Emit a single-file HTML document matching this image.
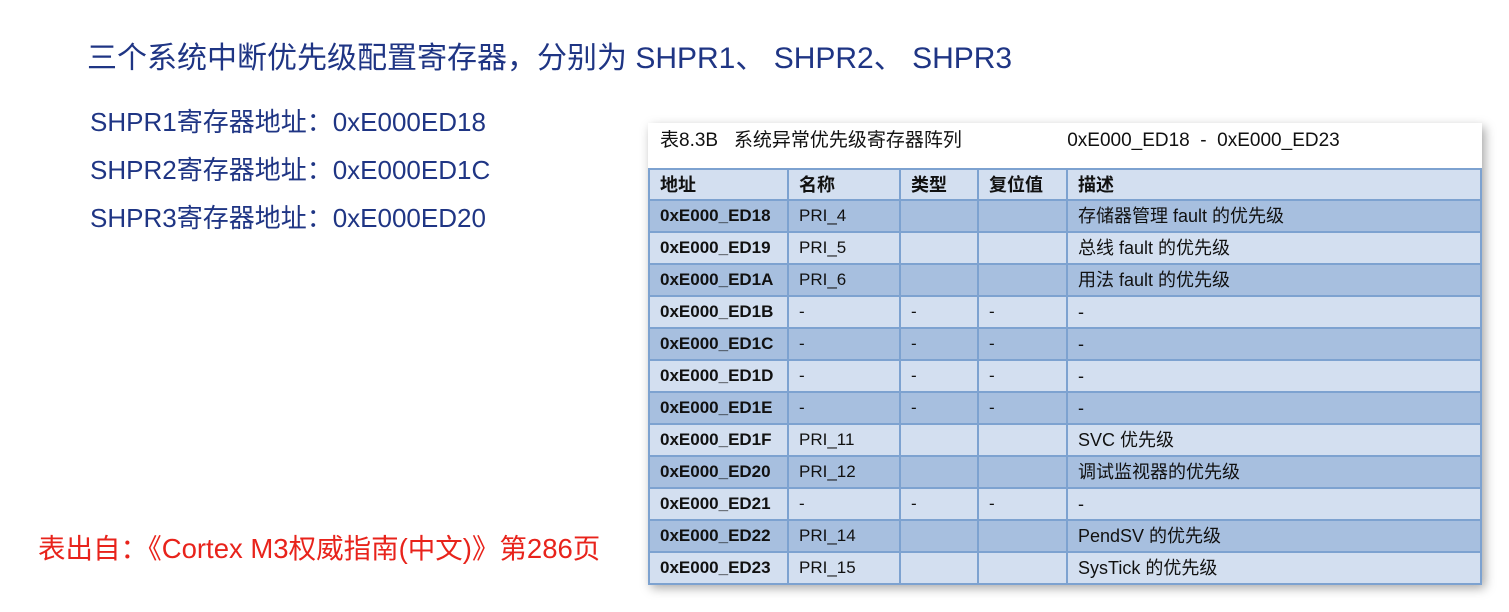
<!DOCTYPE html>
<html><head><meta charset="utf-8"><style>
body{margin:0;width:1509px;height:612px;background:#fff;position:relative;overflow:hidden;font-family:"Liberation Sans","Noto Sans CJK SC",sans-serif}
.t{position:absolute;white-space:nowrap}
.h{color:#1f3584;font-size:30px;left:87px;top:33px}
.a{color:#1f3584;font-size:26px;left:90px}
.r{color:#e8231b;font-size:27.5px;left:38px;top:526px}
.box{position:absolute;left:648px;top:123px;width:834px;height:461px;background:#fff;box-shadow:3px 4px 10px rgba(0,0,0,.35)}
.cap{position:absolute;left:12px;top:2px;font-size:19px;color:#111}
table{position:absolute;left:0;top:45px;border-collapse:collapse;width:834px;font-size:17px;color:#111;table-layout:fixed}
tr{height:32px}
tr.hd{height:31px}
td{border:2px solid #7da2d0;padding:0 0 0 10px;white-space:nowrap;line-height:20px;vertical-align:middle}
tr.l td{background:#d3dff0}
tr.d td{background:#a7bfdf}
td:first-child{font-weight:bold}
tr.hd td{font-weight:bold;background:#d3dff0;font-size:18px}
td:last-child{font-size:18px}
</style></head><body>
<div class="t h">三个系统中断优先级配置寄存器，分别为 SHPR1、 SHPR2、 SHPR3</div>
<div class="t a" style="top:102px">SHPR1寄存器地址：0xE000ED18</div>
<div class="t a" style="top:150px">SHPR2寄存器地址：0xE000ED1C</div>
<div class="t a" style="top:198px">SHPR3寄存器地址：0xE000ED20</div>
<div class="t r">表出自：《Cortex M3权威指南(中文)》第286页</div>
<div class="box">
<div class="cap">表8.3B &nbsp; 系统异常优先级寄存器阵列 <span style="margin-left:100px">0xE000_ED18 &nbsp;- &nbsp;0xE000_ED23</span></div>
<table>
<colgroup><col style="width:139px"><col style="width:112px"><col style="width:78px"><col style="width:89px"><col></colgroup>
<tr class="hd"><td>地址</td><td>名称</td><td>类型</td><td>复位值</td><td>描述</td></tr>
<tr class="d"><td>0xE000_ED18</td><td>PRI_4</td><td></td><td></td><td>存储器管理 fault 的优先级</td></tr>
<tr class="l"><td>0xE000_ED19</td><td>PRI_5</td><td></td><td></td><td>总线 fault 的优先级</td></tr>
<tr class="d"><td>0xE000_ED1A</td><td>PRI_6</td><td></td><td></td><td>用法 fault 的优先级</td></tr>
<tr class="l"><td>0xE000_ED1B</td><td>-</td><td>-</td><td>-</td><td>-</td></tr>
<tr class="d"><td>0xE000_ED1C</td><td>-</td><td>-</td><td>-</td><td>-</td></tr>
<tr class="l"><td>0xE000_ED1D</td><td>-</td><td>-</td><td>-</td><td>-</td></tr>
<tr class="d"><td>0xE000_ED1E</td><td>-</td><td>-</td><td>-</td><td>-</td></tr>
<tr class="l"><td>0xE000_ED1F</td><td>PRI_11</td><td></td><td></td><td>SVC 优先级</td></tr>
<tr class="d"><td>0xE000_ED20</td><td>PRI_12</td><td></td><td></td><td>调试监视器的优先级</td></tr>
<tr class="l"><td>0xE000_ED21</td><td>-</td><td>-</td><td>-</td><td>-</td></tr>
<tr class="d"><td>0xE000_ED22</td><td>PRI_14</td><td></td><td></td><td>PendSV 的优先级</td></tr>
<tr class="l"><td>0xE000_ED23</td><td>PRI_15</td><td></td><td></td><td>SysTick 的优先级</td></tr>
</table>
</div>
</body></html>
